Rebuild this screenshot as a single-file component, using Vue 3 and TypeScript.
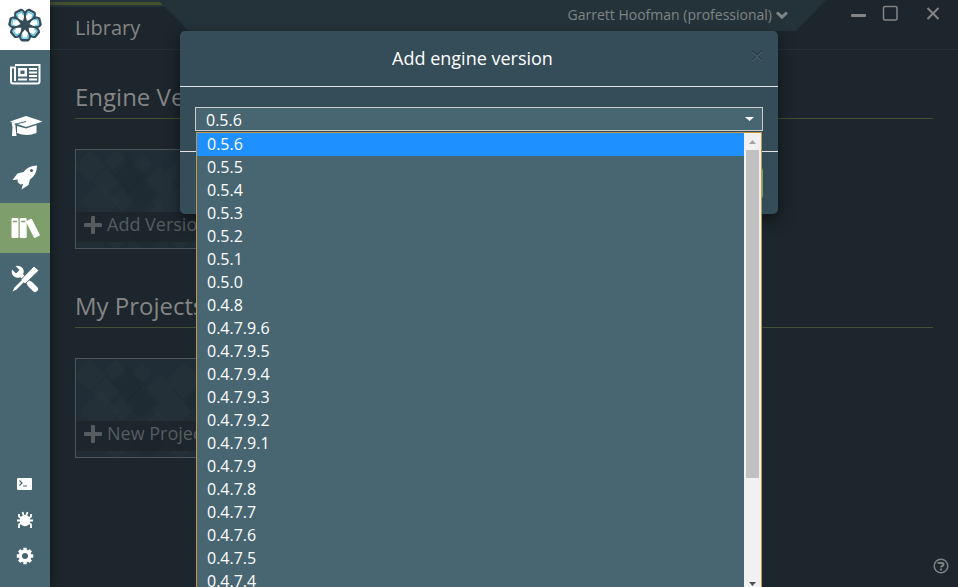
<script setup lang="ts">
import { ref } from 'vue'

const versions: string[] = [
  '0.5.6', '0.5.5', '0.5.4', '0.5.3', '0.5.2', '0.5.1', '0.5.0', '0.4.8',
  '0.4.7.9.6', '0.4.7.9.5', '0.4.7.9.4', '0.4.7.9.3', '0.4.7.9.2', '0.4.7.9.1',
  '0.4.7.9', '0.4.7.8', '0.4.7.7', '0.4.7.6', '0.4.7.5', '0.4.7.4',
]
const selected = ref('0.5.6')

const sections = [
  { id: 'engine', title: 'Engine Versions', action: 'Add Version' },
  { id: 'projects', title: 'My Projects', action: 'New Project' },
]

const PETALS = 7
function point(deg: number, r: number): string {
  const a = (deg * Math.PI) / 180
  return `${(17 + r * Math.cos(a)).toFixed(2)} ${(17 + r * Math.sin(a)).toFixed(2)}`
}
function petal(k: number): number {
  return 90 + (k * 360) / PETALS
}
const indexes = Array.from({ length: PETALS }, (_, k) => k)
const rim = 'M' + indexes.map((k) => {
  const a = petal(k)
  return [point(a - 25.7, 12), point(a - 16, 14.6), point(a - 11, 15.6), point(a + 11, 15.6), point(a + 16, 14.6)].join('L')
}).join('L') + 'Z'
const spokes = indexes.map((k) => {
  const a = petal(k) + 180 / PETALS
  return `M${point(a - 26, 4.5)}L${point(a - 7, 8)}L${point(a - 6, 12.5)}L${point(a + 6, 12.5)}L${point(a + 7, 8)}L${point(a + 26, 4.5)}Z`
}).join('')
const glow = indexes.map((k) => {
  const a = petal(k)
  return `M${point(a - 17, 10)}L${point(a - 13, 13.4)}L${point(a + 13, 13.4)}L${point(a + 17, 10)}`
}).join('')

// Translucent diamonds of the card texture: centre x, centre y, half diagonal
const diamonds: number[][] = [
  [14, 16, 16], [30, 32, 14], [40, 12, 12], [52, 24, 18], [66, 14, 10],
  [24, 52, 20], [46, 50, 12], [64, 44, 16], [84, 30, 14], [96, 52, 20],
  [108, 22, 18], [122, 44, 14], [82, 64, 12], [12, 78, 16], [40, 82, 18],
  [70, 84, 18], [104, 84, 16], [134, 72, 20], [146, 26, 20], [164, 58, 18],
]
function diamond([x, y, r]: number[]): string {
  return `M${x} ${y - r}L${x + r} ${y}L${x} ${y + r}L${x - r} ${y}Z`
}
</script>

<template>
  <div class="app">
    <nav class="sidebar" aria-label="Main">
      <a class="logo" href="#" aria-label="Home">
        <svg width="34" height="34" viewBox="0 0 34 34">
          <path :d="rim" fill="#fff" stroke="#344c58" stroke-width="2.400" stroke-linejoin="round" />
          <path :d="glow" fill="none" stroke="#5cc4e6" stroke-width="1.300" />
          <path :d="spokes" fill="#344c58" />
          <circle cx="17" cy="17" r="4.800" fill="#344c58" />
        </svg>
      </a>
      <a class="item" href="#" aria-label="News">
        <svg width="32" height="24" viewBox="0 0 32 24">
          <path d="M6 2H30.500V18.500a2 2 0 0 1-2 2H4a2 2 0 0 1-2-2V4.500H6V18" fill="none" stroke="#fff" stroke-width="2" />
          <path d="M9 5h9v8.500H9Zm2.500 2.500v3.500h4v-3.500Z" fill="#fff" fill-rule="evenodd" />
          <path d="M9 16.500h9M20 6h8M20 9.500h8M20 13h8M20 16.500h8" stroke="#fff" stroke-width="1.900" />
        </svg>
      </a>
      <a class="item" href="#" aria-label="Learn">
        <svg width="34" height="24" viewBox="0 0 34 24" fill="#fff">
          <path d="M19 2 36 7.500 19 13 3 7.500Z" transform="translate(-1 0)" />
          <path d="M9 12 18 14.500l10.500-3.500V19q-9.500 4-19.500 0Z" />
          <path d="M3.500 8 7.500 9.500V13L8.500 22H4l.5-9Z" />
          <path d="M6.500 10.500 18 7.500" fill="none" stroke="#486672" />
        </svg>
      </a>
      <a class="item" href="#" aria-label="Launch">
        <svg width="26" height="26" viewBox="0 0 26 26">
          <path d="M25 1.500Q16 1.500 11.500 8L5.500 9.500 .5 16l5.500-.5Q5 17 6 18.500L8.500 20.500 11 20 9.500 25.500 16.500 21 18 15.500Q25 10.500 25 1.500Z" fill="#fff" />
          <circle cx="19.500" cy="6.500" r="1.600" fill="#486672" />
        </svg>
      </a>
      <a class="item active" href="#" aria-label="Library" aria-current="page">
        <svg width="30" height="22" viewBox="0 0 30 22" fill="#fff">
          <rect x="1.500" y="1" width="7" height="20" rx="1" />
          <rect x="9.700" y="1" width="7" height="20" rx="1" />
          <rect x="19.500" y="2" width="6.500" height="19" rx="1" transform="rotate(-27 22.500 11)" />
          <path d="M3 4.500h4M11.200 4.500h4" stroke="#7e9e6b" stroke-width="1.400" />
        </svg>
      </a>
      <a class="item" href="#" aria-label="Tools">
        <svg width="28" height="28" viewBox="0 0 28 28">
          <path d="M10 10 18 18" stroke="#fff" stroke-width="4" />
          <path d="M19.500 19.500 24 24" stroke="#fff" stroke-width="6" stroke-linecap="round" />
          <path d="M1 4.500 5 8.500 8.500 5 4.500 1Q8.500 0 11 2.500 13.500 5 12.400 8.500L8.500 12.400Q5 13.500 2.500 11 0 8.500 1 4.500Z" fill="#fff" />
          <path d="M10 14.500 23 1 28 5.500 14 19Z" fill="#fff" stroke="#486672" />
          <path d="M1.500 26.500 3.500 22.500 11.500 14.500 13.500 16.500 5.500 24.500Z" fill="#fff" />
        </svg>
      </a>
      <div class="utilities">
        <a class="small" href="#" aria-label="Console">
          <svg width="16" height="12" viewBox="0 0 16 12">
            <rect width="15" height="12" rx="1" fill="#fff" />
            <path d="M2.500 2.500 5 5 2.500 7.500M6 8h4" fill="none" stroke="#486672" stroke-width="1.200" />
          </svg>
        </a>
        <a class="small" href="#" aria-label="Report a bug">
          <svg width="18" height="18" viewBox="0 0 18 18">
            <ellipse cx="9" cy="9.500" rx="5.300" ry="5.800" fill="#fff" />
            <path d="M6.500 1 7.500 4M11.500 1 10.500 4M5 7 3 5.500V3M13 7l2-1.500V3M5 9.500H1M13 9.500h4M5 12l-2 1.500V17M13 12l2 1.500V17" fill="none" stroke="#fff" stroke-width="1.800" />
          </svg>
        </a>
        <a class="small" href="#" aria-label="Settings">
          <svg width="18" height="18" viewBox="0 0 18 18">
            <circle cx="9" cy="9" r="4.700" fill="none" stroke="#fff" stroke-width="3.400" />
            <path d="M9 .8v2.800M9 14.400v2.800M.8 9h2.800M14.400 9h2.800M3.200 3.200l2 2M12.800 12.800l2 2M3.200 14.800l2-2M12.800 5.200l2-2" stroke="#fff" stroke-width="3.400" />
          </svg>
        </a>
      </div>
    </nav>

    <main class="main">
      <header class="header">
        <div class="ribbon"></div>
        <div class="accent"></div>
        <h1 class="page-title">Library</h1>
        <button class="user" type="button">
          Garrett Hoofman (professional)
          <svg width="12" height="10" viewBox="0 0 12 10"><path d="M1 2.500 6 7.200 11 2.500" fill="none" stroke="#7f8487" stroke-width="3" /></svg>
        </button>
        <div class="controls">
          <button type="button" aria-label="Minimize">
            <svg width="16" height="16" viewBox="0 0 16 16"><rect x="1" y="9" width="15" height="3" rx="1" fill="#858585" /></svg>
          </button>
          <button type="button" aria-label="Maximize">
            <svg width="16" height="16" viewBox="0 0 16 16"><rect x="1.500" y="1.500" width="13.500" height="13.500" rx="1.500" fill="none" stroke="#858585" stroke-width="1.500" /></svg>
          </button>
          <button type="button" aria-label="Close">
            <svg width="16" height="16" viewBox="0 0 16 16"><path d="M2.500 3 13.500 14M13.500 3 2.500 14" stroke="#858585" stroke-width="2" /></svg>
          </button>
        </div>
      </header>

      <section v-for="s in sections" :key="s.id" class="section">
        <h2>{{ s.title }}</h2>
        <button class="card" type="button">
          <svg class="texture" viewBox="0 0 176 98" preserveAspectRatio="xMidYMid slice" aria-hidden="true">
            <rect width="176" height="98" fill="#202d36" />
            <path v-for="(d, i) in diamonds" :key="i" :d="diamond(d)" :fill="i % 4 === 3 ? '#17222a' : '#34424a'" fill-opacity=".15" />
          </svg>
          <span class="caption">
            <svg width="18" height="18" viewBox="0 0 18 18"><path d="M9 1.500v15M1.500 9h15" stroke="#565c5f" stroke-width="4" stroke-linecap="round" /></svg>
            {{ s.action }}
          </span>
        </button>
      </section>

      <button class="help" type="button" aria-label="Help">
        <svg width="16" height="16" viewBox="0 0 16 16">
          <circle cx="8" cy="8" r="6.800" fill="none" stroke="#7d8285" stroke-width="1.500" />
          <path d="M5.500 5.800V5H9q1.700.2 1.500 1.500 0 1.100-1.300 1.500Q8 8.400 8 9.600M8 10.500v2" fill="none" stroke="#7d8285" stroke-width="2" />
        </svg>
      </button>
    </main>

    <div class="overlay">
      <form class="modal" role="dialog" aria-labelledby="modal-title" @submit.prevent>
        <div class="modal-header">
          <h3 id="modal-title">Add engine version</h3>
          <button class="close" type="button" aria-label="Close dialog">
            <svg width="12" height="12" viewBox="0 0 12 12"><path d="M1.500 1 10.500 10M10.500 1 1.500 10" stroke="#26363f" stroke-width="1.500" /><path d="M1.500 2 10.500 11M10.500 2 1.500 11" stroke="#5b6d76" /></svg>
          </button>
        </div>
        <div class="modal-body">
          <div class="picker">
            <select v-model="selected" aria-label="Engine version">
              <option v-for="v in versions" :key="v" :value="v">{{ v }}</option>
            </select>
            <svg class="caret" width="9" height="4" viewBox="0 0 9 4"><path d="M0 0h9L4.500 4Z" fill="#fff" /></svg>
            <div class="popup">
              <ul role="listbox" aria-label="Engine versions">
                <li
                  v-for="v in versions"
                  :key="v"
                  role="option"
                  :aria-selected="v === selected"
                  :class="{ chosen: v === selected }"
                  @click="selected = v"
                >{{ v }}</li>
              </ul>
              <div class="scrollbar">
                <svg width="17" height="17" viewBox="0 0 17 17"><path d="M5 11 8.500 7 12 11Z" fill="#a3a3a3" /></svg>
                <div class="track"><div class="thumb"></div></div>
                <svg width="17" height="17" viewBox="0 0 17 17"><path d="M5 6 8.500 10 12 6Z" fill="#505050" /></svg>
              </div>
            </div>
          </div>
        </div>
        <div class="modal-footer">
          <button class="submit" type="submit">Add</button>
        </div>
      </form>
    </div>
  </div>
</template>

<style>
body {
  background: #1c262c;
}
</style>

<style scoped>
.app {
  position: relative;
  display: flex;
  height: 100vh;
  overflow: hidden;
  font-family: 'Open Sans', 'Noto Sans', sans-serif;
  background: #1c262c;
}
.app * {
  box-sizing: border-box;
}
button {
  padding: 0;
  border: 0;
  background: none;
  font: inherit;
  color: inherit;
}
svg {
  display: block;
  flex: none;
}
.sidebar {
  display: flex;
  flex-direction: column;
  gap: 1px;
  width: 50px;
  flex: none;
  background: #486672;
  box-shadow: 0 0 10px rgba(0, 0, 0, 0.5);
  z-index: 1;
}
.logo,
.item {
  display: flex;
  align-items: center;
  justify-content: center;
  height: 50px;
}
.logo {
  margin-bottom: -1px;
  background: #fff;
}
.active {
  background: #7e9e6b;
}
.utilities {
  display: flex;
  flex-direction: column;
  margin-top: auto;
  padding-bottom: 13px;
}
.small {
  display: flex;
  align-items: center;
  justify-content: center;
  height: 36px;
}
.main {
  position: relative;
  flex: 1;
  min-width: 0;
}
.header {
  position: relative;
  display: flex;
  align-items: flex-start;
  height: 50px;
  padding: 0 17px 0 25px;
  border-bottom: 1px solid #243037;
}
.ribbon {
  position: absolute;
  top: 0;
  left: 0;
  right: 132px;
  height: 31px;
  background: #24333a;
  clip-path: polygon(0 0, 100% 0, calc(100% - 30px) 100%, 139px 100%, 115px 7px, 0 7px);
}
.accent {
  position: absolute;
  top: 2px;
  left: 0;
  width: 113px;
  height: 3px;
  background: #43502f;
  clip-path: polygon(0 0, calc(100% - 3px) 0, 100% 100%, 0 100%);
}
.page-title {
  position: relative;
  flex: 1;
  margin: 0;
  padding-top: 14px;
  font-size: 20px;
  line-height: 28px;
  font-weight: 400;
  color: #858585;
}
.user {
  position: relative;
  display: flex;
  align-items: center;
  gap: 4px;
  margin-right: 62px;
  padding-top: 5px;
  font-size: 14px;
  line-height: 20px;
  color: #7f8487;
}
.controls {
  display: flex;
  align-items: center;
  padding-top: 5px;
}
.controls button + button {
  margin-left: 16px;
}
.controls button:last-child {
  margin-left: 27px;
}
.section {
  padding: 30px 25px 0;
}
.section h2 {
  margin: 0 0 30px;
  padding-bottom: 4px;
  border-bottom: 1px solid #43502f;
  font-size: 24px;
  line-height: 34px;
  font-weight: 400;
  color: #858585;
}
.section + .section {
  padding-top: 40px;
}
.card {
  position: relative;
  display: flex;
  align-items: flex-end;
  width: 178px;
  height: 100px;
  padding-bottom: 6px;
  border: 1px solid #4c5559;
}
.texture {
  position: absolute;
  inset: 0;
  width: 100%;
  height: 100%;
}
.caption {
  position: relative;
  display: flex;
  align-items: center;
  gap: 5px;
  width: 100%;
  height: 30px;
  padding-left: 8px;
  padding-bottom: 5px;
  font-size: 18px;
  line-height: 25px;
  color: #565c5f;
  background: rgba(27, 36, 42, 0.8);
}
.help {
  position: absolute;
  right: 9px;
  bottom: 13px;
}
.overlay {
  position: absolute;
  inset: 0;
  z-index: 2;
  padding: 31px 15px;
}
.modal {
  max-width: 598px;
  margin: 0 auto;
  border-radius: 5px;
  background: #354d58;
  box-shadow: 0 5px 15px rgba(0, 0, 0, 0.5);
}
.modal-header {
  position: relative;
  height: 56px;
  padding: 14px 28px 0 15px;
  border-bottom: 1px solid #e5e5e5;
}
.modal-header h3 {
  margin: 0;
  font-size: 18px;
  line-height: 26px;
  font-weight: 400;
  text-align: center;
  color: #fff;
}
.close {
  position: absolute;
  top: 19px;
  right: 15px;
}
.modal-body {
  padding: 20px 15px;
}
.picker {
  position: relative;
}
select {
  display: block;
  width: 100%;
  height: 24px;
  padding: 1px 10px 0;
  appearance: none;
  border: 1px solid #ccc;
  border-radius: 0;
  background: #486672;
  font: 16px/22px 'Open Sans', 'Noto Sans', sans-serif;
  color: #fff;
}
.caret {
  position: absolute;
  top: 10px;
  right: 9px;
}
.popup {
  position: absolute;
  top: 25px;
  left: 1px;
  right: 1px;
  display: flex;
  border: 1px solid #c59544;
  background: #486672;
}
ul {
  flex: 1;
  margin: 0;
  padding: 0;
  list-style: none;
}
li {
  height: 23px;
  padding-left: 10px;
  font-size: 16px;
  line-height: 23px;
  color: #fff;
}
.chosen {
  background: #1e90ff;
}
.scrollbar {
  display: flex;
  flex-direction: column;
  width: 17px;
  background: #f1f1f1;
}
.track {
  flex: 1;
  padding: 0 2px;
}
.thumb {
  height: 77%;
  background: #c1c1c1;
}
.modal-footer {
  display: flex;
  justify-content: flex-end;
  padding: 15px;
  border-top: 1px solid #e5e5e5;
}
.submit {
  width: 60px;
  height: 32px;
  border-radius: 4px;
  background: #7e9e6b;
  font-size: 14px;
  color: #fff;
}
</style>
